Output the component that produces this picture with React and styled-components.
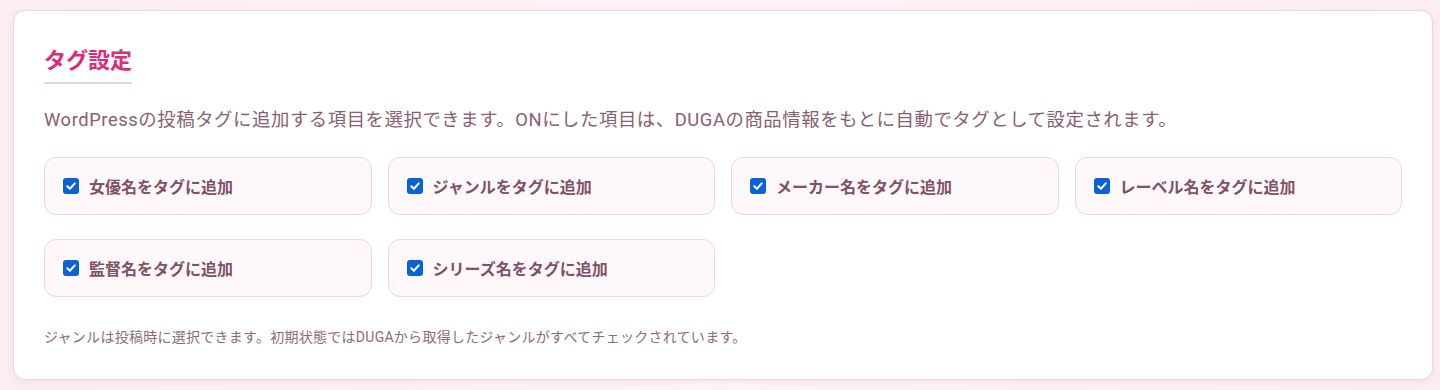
import { createGlobalStyle, styled } from "styled-components";

const GlobalStyle = createGlobalStyle`
  html, body {
    margin: 0;
    padding: 0;
  }
  body {
    background: linear-gradient(90deg, #fbedf2 0%, #fdf3f6 50%, #fbedf2 100%);
    font-family: "Roboto", "Noto Sans CJK JP", sans-serif;
    color: #8b5d72;
  }
`;

const Page = styled.div`
  padding: 10px 7px 10px 13px;
`;

const Card = styled.section`
  background: #ffffff;
  border: 1px solid #f0d4df;
  border-radius: 12px;
  padding: 30px;
  box-shadow: 0 2px 6px rgba(224, 160, 186, 0.18);
`;

const Title = styled.h2`
  display: inline-block;
  margin: 0 0 21px;
  padding-bottom: 1px;
  border-bottom: 2px solid #efd0e1;
  font-size: 22px;
  line-height: 40px;
  font-weight: 700;
  color: #e0297c;
`;

const Lead = styled.p`
  margin: 0 0 23px;
  font-size: 18.4px;
  line-height: 29.4px;
  letter-spacing: 0.55px;
  color: #8b5d72;
`;

const OptionGrid = styled.div`
  display: grid;
  grid-template-columns: repeat(4, 1fr);
  column-gap: 16px;
  row-gap: 24px;
`;

const Option = styled.label`
  display: flex;
  align-items: center;
  gap: 10px;
  height: 58px;
  box-sizing: border-box;
  padding: 0 18px;
  background: #fff8fb;
  border: 1px solid #ebd7df;
  border-radius: 12px;
  font-size: 16px;
  font-weight: 700;
  color: #7f5166;
  cursor: pointer;
`;

const HiddenInput = styled.input`
  position: absolute;
  opacity: 0;
  width: 0;
  height: 0;
`;

const Box = styled.span`
  display: inline-flex;
  align-items: center;
  justify-content: center;
  width: 16px;
  height: 16px;
  border-radius: 3px;
  background: ${(props) => (props.$checked ? "#0b62d8" : "#ffffff")};
  border: ${(props) => (props.$checked ? "none" : "1px solid #767676")};
  flex-shrink: 0;
`;

const Note = styled.p`
  margin: 29px 0 0;
  font-size: 14px;
  line-height: 22.4px;
  letter-spacing: 0.27px;
  color: #8d6b7a;
`;

const options = [
  "女優名をタグに追加",
  "ジャンルをタグに追加",
  "メーカー名をタグに追加",
  "レーベル名をタグに追加",
  "監督名をタグに追加",
  "シリーズ名をタグに追加",
];

function CheckOption({ label }) {
  return (
    <Option>
      <HiddenInput type="checkbox" defaultChecked />
      <Box $checked>
        <svg width="12" height="12" viewBox="0 0 12 12" fill="none">
          <path
            d="M2.3 6.2 L4.9 8.7 L9.8 3.4"
            stroke="#fff"
            strokeWidth="2"
            strokeLinecap="round"
            strokeLinejoin="round"
          />
        </svg>
      </Box>
      <span>{label}</span>
    </Option>
  );
}

export default function App() {
  return (
    <>
      <GlobalStyle />
      <Page>
        <Card>
          <Title>タグ設定</Title>
          <Lead>
            WordPressの投稿タグに追加する項目を選択できます。ONにした項目は、DUGAの商品情報をもとに自動でタグとして設定されます。
          </Lead>
          <OptionGrid>
            {options.map((label) => (
              <CheckOption key={label} label={label} />
            ))}
          </OptionGrid>
          <Note>
            ジャンルは投稿時に選択できます。初期状態ではDUGAから取得したジャンルがすべてチェックされています。
          </Note>
        </Card>
      </Page>
    </>
  );
}
